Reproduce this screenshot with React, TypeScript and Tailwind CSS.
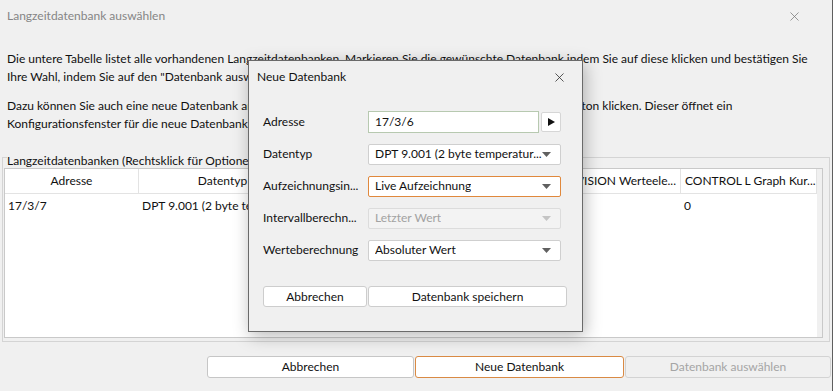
import React from 'react';
import { X } from 'lucide-react';

const font = { fontFamily: '"Lato", "Noto Sans", sans-serif' };

function Caret({ disabled = false }: { disabled?: boolean }) {
  return (
    <svg width="9" height="5" viewBox="0 0 9 5" className="shrink-0">
      <path d="M0 0 L9 0 L4.5 5 Z" fill={disabled ? '#c4c4c4' : '#606060'} />
    </svg>
  );
}

interface SelectProps {
  value: string;
  focused?: boolean;
  disabled?: boolean;
}

function Select({ value, focused, disabled }: SelectProps) {
  return (
    <div
      className={
        'flex h-[21px] w-[193px] items-center justify-between rounded-[2px] border pl-[6px] pr-[9px] ' +
        (focused
          ? 'border-[#e0883c] bg-white'
          : disabled
          ? 'border-[#dcdcdc] bg-[#f3f3f3] text-[#a2a2a2]'
          : 'border-[#cfcfcf] bg-white')
      }
    >
      <span className="truncate">{value}</span>
      <Caret disabled={disabled} />
    </div>
  );
}

function FieldRow({ label, children }: { label: string; children: React.ReactNode }) {
  return (
    <div className="flex h-[32px] items-center">
      <span className="w-[105px] shrink-0 whitespace-nowrap">{label}</span>
      {children}
    </div>
  );
}

function NewDatabaseDialog() {
  return (
    <div className="absolute left-[248px] top-[60px] flex h-[272px] w-[335px] flex-col border border-[#6a6a6a] bg-[#f0f0f0] shadow-[2px_4px_16px_rgba(0,0,0,0.28)]">
      <div className="flex h-[32px] items-center justify-between pl-[8px] pr-[15px]">
        <span>Neue Datenbank</span>
        <X size={15} strokeWidth={1.3} color="#333" />
      </div>
      <div className="flex flex-col pl-[14px] pt-[13px]">
        <FieldRow label="Adresse">
          <div className="flex h-[22px] w-[171px] items-center border border-[#b7c9b0] bg-white pl-[6px]">17/3/6</div>
          <div className="ml-[2px] flex h-[20px] w-[20px] items-center justify-center rounded-[2px] border border-[#d6d6d6] bg-white">
            <svg width="7" height="8" viewBox="0 0 7 8">
              <path d="M0 0 L7 4 L0 8 Z" fill="#111" />
            </svg>
          </div>
        </FieldRow>
        <FieldRow label="Datentyp">
          <Select value="DPT 9.001 (2 byte temperatur..." />
        </FieldRow>
        <FieldRow label="Aufzeichnungsin...">
          <Select value="Live Aufzeichnung" focused />
        </FieldRow>
        <FieldRow label="Intervallberechn...">
          <Select value="Letzter Wert" disabled />
        </FieldRow>
        <FieldRow label="Werteberechnung">
          <Select value="Absoluter Wert" />
        </FieldRow>
        <div className="mt-[20px] flex gap-[1px]">
          <button className="h-[21px] w-[104px] rounded-[3px] border border-[#cdcdcd] bg-white">Abbrechen</button>
          <button className="h-[21px] w-[199px] rounded-[3px] border border-[#cdcdcd] bg-white">Datenbank speichern</button>
        </div>
      </div>
    </div>
  );
}

const columns = [
  { title: 'Adresse', width: 134, align: 'center' },
  { title: 'Datentyp', width: 168, align: 'center' },
  { title: 'Aufzeichnung', width: 134, align: 'center' },
  { title: 'Berechnung', width: 104, align: 'center' },
  { title: 'CONTROL L VISION Werteele...', width: 136, align: 'end' },
  { title: 'CONTROL L Graph Kur...', width: 136, align: 'start' },
];

const row = ['17/3/7', 'DPT 9.001 (2 byte temperature)', 'Live Aufzeichnung', 'Letzter Wert', '', '0'];

export default function App() {
  return (
    <div className="relative flex h-[391px] w-[834px] overflow-hidden bg-[#f0f0f0] text-[12px] text-[#111]" style={font}>
      <div className="flex w-[832px] flex-col">
        {/* Title bar */}
        <div className="flex h-[32px] items-center justify-between pl-[7px] pr-[30px]">
          <span className="text-[#858585]">Langzeitdatenbank auswählen</span>
          <X size={15} strokeWidth={1.2} color="#777" />
        </div>

        {/* Description */}
        <div className="mt-[18px] whitespace-nowrap pl-[7px] leading-[18px]">
          <p>
            Die untere Tabelle listet alle vorhandenen Langzeitdatenbanken. Markieren Sie die gewünschte Datenbank indem Sie auf diese klicken und bestätigen Sie
            <br />
            Ihre Wahl, indem Sie auf den "Datenbank auswählen" Button klicken.
          </p>
          <p className="mt-[11px]">
            Dazu können Sie auch eine neue Datenbank anlegen, indem Sie nur hier unten auf den "Neue Datenbank" Button klicken. Dieser öffnet ein
            <br />
            Konfigurationsfenster für die neue Datenbank.
          </p>
        </div>

        {/* Table group */}
        <fieldset className="ml-[2px] mt-[13px] h-[196px] w-[828px] border border-[#d4d4d4] pb-[2px] pl-[1px] pr-[6px]">
          <legend className="ml-[3px] pt-[8px] leading-[14px]">Langzeitdatenbanken (Rechtsklick für Optionen)</legend>
          <div className="flex h-[170px] flex-col border border-[#c9c9c9] bg-[#f0f0f0]">
            <div className="mr-[5px] flex h-full flex-col bg-white">
              <div className="flex h-[25px] border-b border-[#e3e3e3]">
                {columns.map((c) => (
                  <div
                    key={c.title}
                    className={
                      'flex shrink-0 items-center overflow-hidden whitespace-nowrap border-r border-[#e3e3e3] px-[4px] ' +
                      (c.align === 'center' ? 'justify-center' : c.align === 'end' ? 'justify-end' : 'justify-start')
                    }
                    style={{ width: c.width }}
                  >
                    {c.title}
                  </div>
                ))}
              </div>
              <div className="flex h-[24px]">
                {row.map((v, i) => (
                  <div
                    key={i}
                    className="flex shrink-0 items-center overflow-hidden whitespace-nowrap px-[3px]"
                    style={{ width: columns[i].width }}
                  >
                    {v}
                  </div>
                ))}
              </div>
            </div>
          </div>
        </fieldset>

        {/* Footer buttons */}
        <div className="mt-[14px] flex justify-end gap-[1px] pr-[1px]">
          <button className="h-[22px] w-[207px] rounded-[3px] border border-[#c6c6c6] bg-white">Abbrechen</button>
          <button className="h-[22px] w-[209px] rounded-[3px] border border-[#d98a44] bg-white">Neue Datenbank</button>
          <button className="h-[22px] w-[206px] rounded-[3px] border border-[#d3d3d3] bg-[#f0f0f0] text-[#a5a5a5]">
            Datenbank auswählen
          </button>
        </div>
      </div>

      {/* Edge of the window behind */}
      <div className="w-[2px] border-l border-[#5f5f5f] bg-white" />

      <NewDatabaseDialog />
    </div>
  );
}
